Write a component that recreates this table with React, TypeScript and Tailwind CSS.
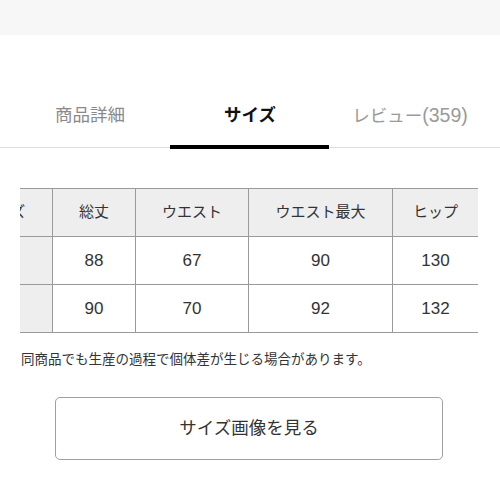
import React from "react";

const font = { fontFamily: '"Liberation Sans", "Noto Sans CJK JP", sans-serif' };

export default function App() {
  const headers = ["サイズ", "総丈", "ウエスト", "ウエスト最大", "ヒップ"];
  const rows = [
    ["", "88", "67", "90", "130"],
    ["", "90", "70", "92", "132"],
  ];
  const widths = ["w-[99px]", "w-[83px]", "w-[113px]", "w-[144px]", "w-[86px]"];
  return (
    <div className="w-[500px] h-[500px] bg-white overflow-hidden text-[#333]" style={font}>
      <div className="h-[35px] bg-[#f7f7f7]" />
      <div className="h-[60px]" />
      <div className="flex px-[10px] border-b border-[#dddddd]">
        <div className="w-[160px] h-[52px] flex justify-center pt-[10px] text-[17.5px] leading-[20px] text-[#8a8a8a]">商品詳細</div>
        <div className="relative w-[160px] h-[52px] flex justify-center pt-[10px] text-[17.5px] leading-[20px] font-bold text-[#111]">
          サイズ
          <div className="absolute left-0 right-[1px] bottom-[-2px] h-[4px] bg-black" />
        </div>
        <div className="w-[160px] h-[52px] flex justify-center items-baseline pt-[10px] text-[17.5px] leading-[20px] text-[#9a9a9a]">
          <span>レビュー</span>
          <span className="text-[19.5px]">(359)</span>
        </div>
      </div>
      <div className="mt-[40px] ml-[20px] w-[458px] overflow-hidden">
        <table className="-ml-[67px] border-collapse table-fixed w-[525px]">
          <thead>
            <tr className="h-[48px]">
              {headers.map((h, i) => (
                <th
                  key={h}
                  className={`${widths[i]} bg-[#eeeeee] border border-[#9a9a9a] font-normal text-[15px] text-[#333]`}
                >
                  {h}
                </th>
              ))}
            </tr>
          </thead>
          <tbody>
            {rows.map((r, ri) => (
              <tr key={ri} className="h-[48px]">
                {r.map((c, i) => (
                  <td
                    key={i}
                    className={`${i === 0 ? "bg-[#eeeeee]" : "bg-white"} border border-[#9a9a9a] text-center text-[17px] text-[#333]`}
                  >
                    {c}
                  </td>
                ))}
              </tr>
            ))}
          </tbody>
        </table>
      </div>
      <p className="mt-[17px] ml-[21px] text-[13.5px] leading-[20px] text-[#333]">
        同商品でも生産の過程で個体差が生じる場合があります。
      </p>
      <div className="mt-[27px] flex justify-center">
        <button className="ml-[-2px] w-[388px] h-[63px] border border-[#a0a0a0] rounded-[5px] bg-white text-[17.5px] text-[#333]">
          サイズ画像を見る
        </button>
      </div>
    </div>
  );
}
